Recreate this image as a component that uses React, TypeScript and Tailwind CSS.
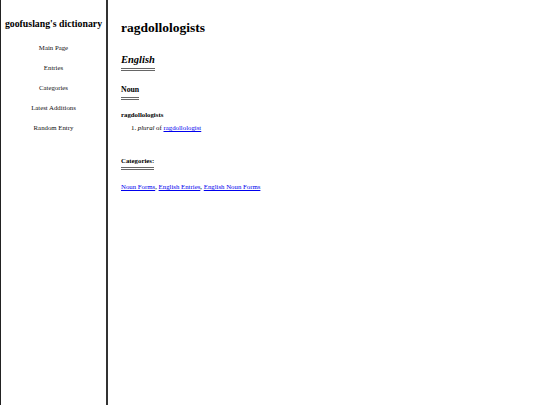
const navItems = ['Main Page', 'Entries', 'Categories', 'Latest Additions', 'Random Entry']

const serif = { fontFamily: '"Liberation Serif", "Times New Roman", serif' }

function Underlined({ children, className }: { children: React.ReactNode; className?: string }) {
  return (
    <span className={'inline-block border-b-[3px] border-double border-[#666] pb-[2px] ' + (className ?? '')}>
      {children}
    </span>
  )
}

export default function App() {
  return (
    <div className="flex h-[405px] w-[540px] bg-white text-black" style={serif}>
      <aside className="flex w-[108px] shrink-0 flex-col items-center border-l border-r-2 border-l-[#222] border-r-[#333]">
        <h1 className="mt-[17px] whitespace-nowrap text-[9.8px] font-bold leading-[14px]">goofuslang's dictionary</h1>
        <nav className="mt-[11px] flex flex-col items-center gap-[9px]">
          {navItems.map((item) => (
            <a key={item} className="text-[6.8px] leading-[11px] text-[#111]">
              {item}
            </a>
          ))}
        </nav>
      </aside>
      <main className="flex flex-1 flex-col pl-[13px] pt-[18px]">
        <h1 className="text-[13.5px] font-bold leading-[20px]">ragdollologists</h1>
        <h2 className="mt-[16px] text-[10.5px] font-bold italic leading-[12px]">
          <Underlined>English</Underlined>
        </h2>
        <h3 className="mt-[14px] text-[7.8px] font-bold leading-[10px]">
          <Underlined>Noun</Underlined>
        </h3>
        <p className="mt-[10px] text-[6.8px] font-bold leading-[9px]">ragdollologists</p>
        <ol className="ml-[10px] mt-[4px] text-[6.8px] leading-[9px]">
          <li>
            1. <i>plural</i> of <a className="text-[#0000ee] underline">ragdollologist</a>
          </li>
        </ol>
        <h4 className="mt-[24px] text-[6.8px] font-bold leading-[9px]">
          <Underlined>Categories:</Underlined>
        </h4>
        <p className="mt-[12px] text-[6.8px] leading-[9px]">
          <a className="text-[#0000ee] underline">Noun Forms</a>, <a className="text-[#0000ee] underline">English Entries</a>,{' '}
          <a className="text-[#0000ee] underline">English Noun Forms</a>
        </p>
      </main>
    </div>
  )
}
